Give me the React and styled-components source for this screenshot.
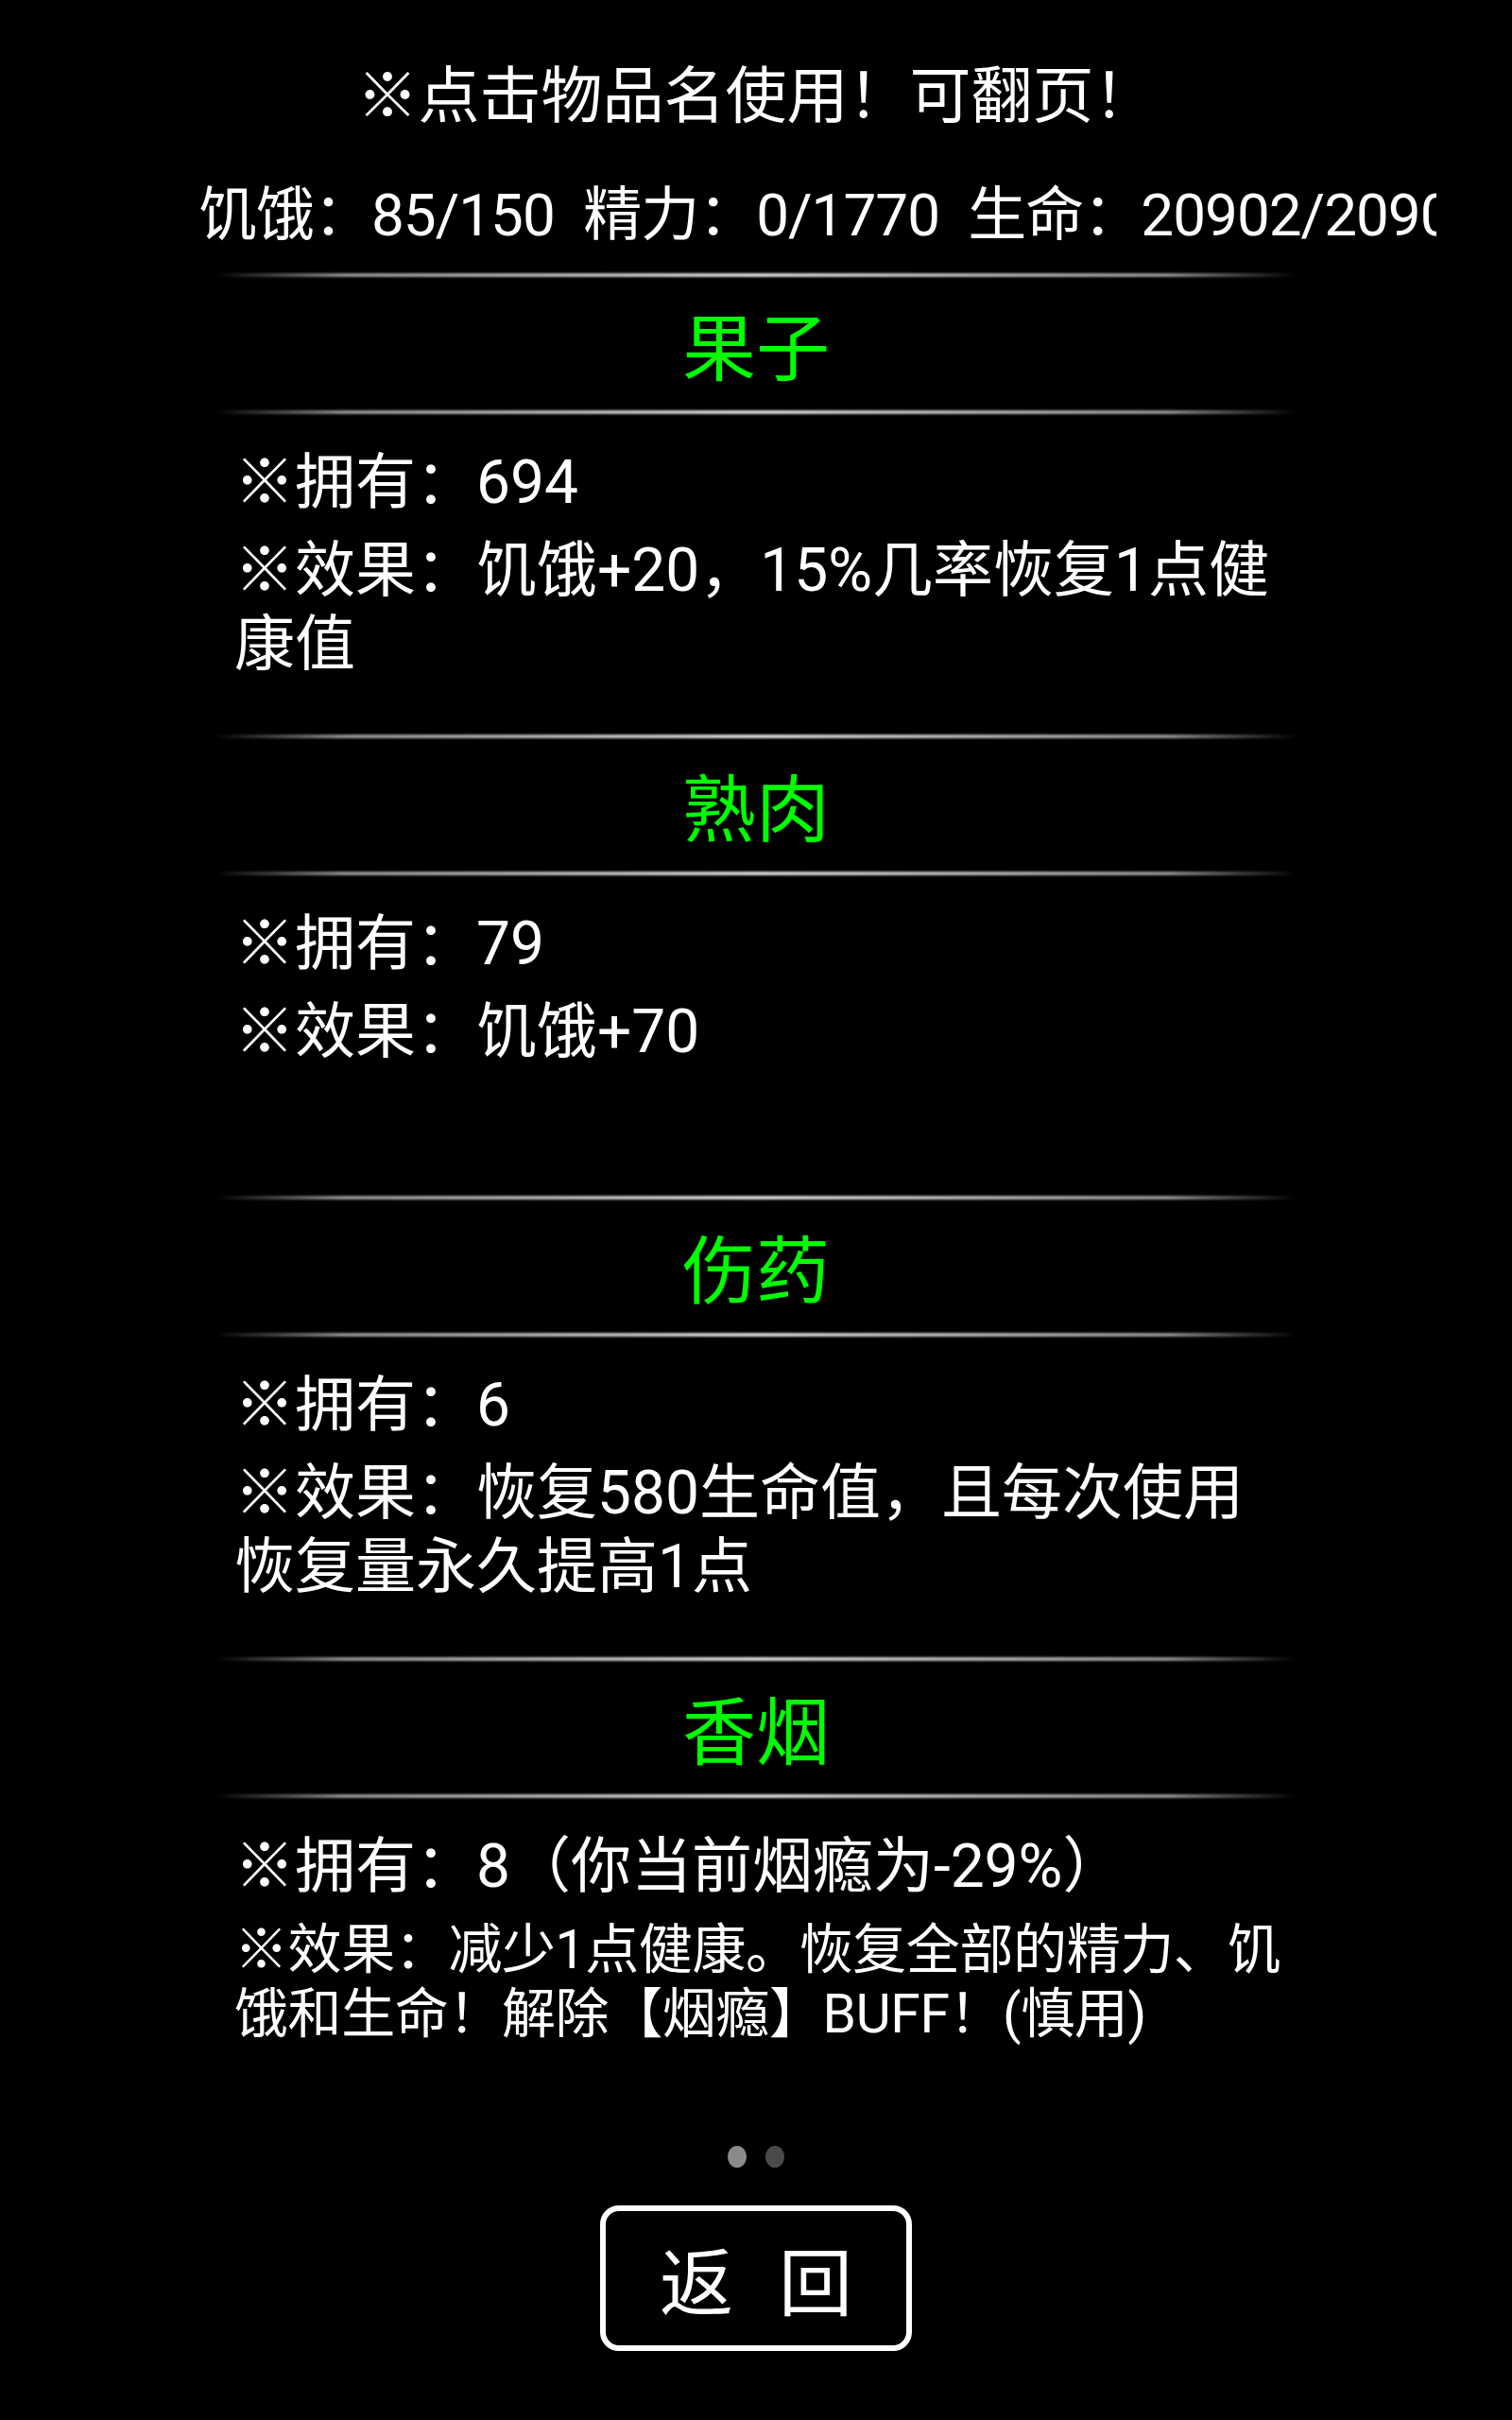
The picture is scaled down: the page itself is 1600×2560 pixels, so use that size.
import React from 'react';
import styled, { createGlobalStyle } from 'styled-components';

const GlobalStyle = createGlobalStyle`
    html, body {
        margin: 0;
        padding: 0;
        background: #000;
    }
    body {
        font-family: Roboto, "Noto Sans CJK SC", "Noto Sans", sans-serif;
        color: #fff;
    }
`;

const Page = styled.div`
    width: 1600px;
    min-height: 2560px;
    background: #000;
    display: flex;
    flex-direction: column;
    align-items: center;
    padding-top: 62px;
    box-sizing: border-box;
`;

const Tip = styled.div`
    font-size: 65px;
    line-height: 80px;
    text-align: center;
    white-space: nowrap;
`;

const Stats = styled.div`
    align-self: flex-start;
    margin: 46px 0 0 210px;
    width: 1310px;
    overflow: hidden;
    white-space: nowrap;
    font-size: 62px;
    line-height: 80px;
    letter-spacing: -1px;
    word-spacing: 16px;
`;

const List = styled.div`
    width: 1146px;
    margin-top: 20px;
    display: flex;
    flex-direction: column;
`;

const Divider = styled.div`
    height: 4px;
    margin: 0.5px 0;
    background: linear-gradient(
        90deg,
        rgba(255, 255, 255, 0) 0%,
        rgba(190, 190, 190, 0.75) 12%,
        rgba(225, 225, 225, 0.95) 50%,
        rgba(190, 190, 190, 0.75) 88%,
        rgba(255, 255, 255, 0) 100%
    );
    filter: blur(0.8px);
`;

const ItemName = styled.div`
    height: 140px;
    display: flex;
    align-items: center;
    justify-content: center;
    font-size: 78px;
    color: #00ff00;
`;

const ItemBody = styled.div`
    height: 338px;
    box-sizing: border-box;
    padding: 34px 4px 0 21px;
    display: flex;
    flex-direction: column;
    gap: 15px;
`;

const Line = styled.div`
    font-size: ${(p) => (p.small ? '57px' : '64px')};
    line-height: ${(p) => (p.small ? '68px' : '78px')};
    letter-spacing: ${(p) => (p.small ? '-0.4px' : '0')};
`;

const Pager = styled.div`
    display: flex;
    gap: 20px;
    margin-top: 30px;
`;

const Dot = styled.span`
    width: 20px;
    height: 23px;
    border-radius: 50%;
    background: ${(p) => (p.active ? '#8a8a8a' : '#4a4a4a')};
`;

const BackButton = styled.button`
    margin-top: 40px;
    width: 330px;
    height: 154px;
    box-sizing: border-box;
    border: 6px solid #fff;
    border-radius: 20px;
    background: #000;
    color: #fff;
    font-family: inherit;
    font-size: 78px;
    display: flex;
    align-items: center;
    justify-content: center;
    gap: 48px;
    padding: 0;
`;

const items = [
    {
        name: '果子',
        own: '694',
        effect: '饥饿+20，15%几率恢复1点健康值',
    },
    {
        name: '熟肉',
        own: '79',
        effect: '饥饿+70',
    },
    {
        name: '伤药',
        own: '6',
        effect: '恢复580生命值，且每次使用恢复量永久提高1点',
    },
    {
        name: '香烟',
        own: '8（你当前烟瘾为-29%）',
        effect: '减少1点健康。恢复全部的精力、饥饿和生命！解除【烟瘾】BUFF！(慎用)',
        small: true,
    },
];

const App = () => {
    return (
        <>
            <GlobalStyle />
            <Page>
                <Tip>※点击物品名使用！可翻页！</Tip>
                <Stats>饥饿：85/150 精力：0/1770 生命：20902/20902</Stats>
                <List>
                    {items.map((item) => (
                        <React.Fragment key={item.name}>
                            <Divider />
                            <ItemName>{item.name}</ItemName>
                            <Divider />
                            <ItemBody>
                                <Line>※拥有：{item.own}</Line>
                                <Line small={item.small}>※效果：{item.effect}</Line>
                            </ItemBody>
                        </React.Fragment>
                    ))}
                </List>
                <Pager>
                    <Dot active />
                    <Dot />
                </Pager>
                <BackButton>
                    <span>返</span>
                    <span>回</span>
                </BackButton>
            </Page>
        </>
    );
};

export default App;
